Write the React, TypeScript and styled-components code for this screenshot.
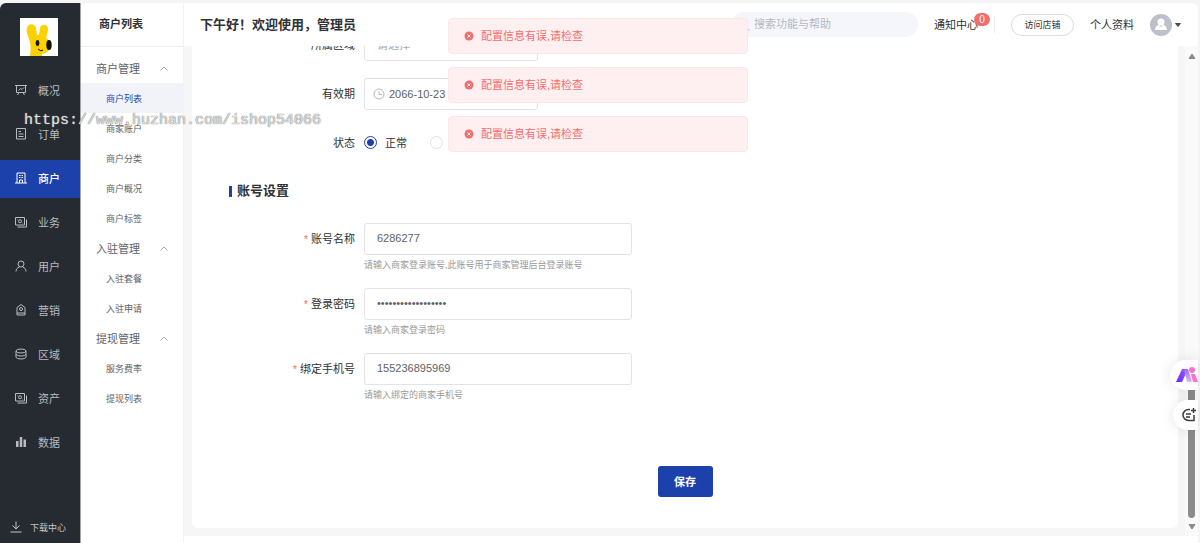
import React, { useState } from 'react';
import styled, { createGlobalStyle, css } from 'styled-components';

const GlobalStyle = createGlobalStyle`
  *, *::before, *::after { box-sizing: border-box; }
  body { margin: 0; background: #f5f5f6; }
  body, button, input, select {
    font-family: 'Liberation Sans', 'Noto Sans CJK SC', sans-serif;
    font-size: 11px;
    color: #303133;
  }
  a { color: inherit; text-decoration: none; }
  button { cursor: pointer; }
`;

const Shell = styled.div`
  position: relative;
  display: flex;
  height: 100vh;
  padding: 3px 2px 0 0;
  overflow: hidden;
`;

const Sidebar = styled.aside`
  flex: none;
  display: flex;
  flex-direction: column;
  width: 81px;
  background: #262b31;
  border-right: 1px solid #a2a4a7;
  border-top-left-radius: 6px;
`;

const Logo = styled.svg`
  width: 38px;
  height: 38px;
  margin: 15px auto 16px 20px;
  background: #fff;
`;

const MainNav = styled.nav`
  flex: 1;
  display: flex;
  flex-direction: column;
  gap: 6px;
`;

const NavLink = styled.a<{ $active?: boolean }>`
  display: flex;
  align-items: center;
  gap: 11px;
  height: 38px;
  padding: 0 0 2px 15px;
  color: ${(p) => (p.$active ? '#fff' : '#b9bbbe')};
  font-weight: ${(p) => (p.$active ? 500 : 400)};
  background: ${(p) => (p.$active ? '#1d41ab' : 'transparent')};
`;

const DownloadLink = styled.a`
  display: flex;
  align-items: center;
  gap: 8px;
  height: 32px;
  padding-left: 10px;
  font-size: 9px;
  color: #c3c5c8;
`;

const LineIcon = styled.svg`
  flex: none;
  width: 12px;
  height: 12px;
  fill: none;
  stroke: currentColor;
  stroke-width: 2;
`;

const SubMenu = styled.aside`
  flex: none;
  width: 103px;
  background: #fff;
  border-right: 1px solid #f3f3f4;
`;

const SubTitle = styled.h2`
  height: 44px;
  margin: 0 0 6px;
  padding-left: 18px;
  border-bottom: 1px solid #efeff1;
  font-size: 11px;
  line-height: 42px;
  font-weight: 700;
`;

const GroupButton = styled.button`
  display: flex;
  align-items: center;
  justify-content: space-between;
  width: 100%;
  height: 30px;
  padding: 0 15px;
  border: 0;
  background: none;
  color: #606266;
`;

const Chevron = styled.svg`
  width: 8px;
  height: 5px;
  fill: none;
  stroke: #a5a8ae;
`;

const SubLink = styled.a<{ $active?: boolean }>`
  display: flex;
  align-items: center;
  height: 30px;
  padding-left: 25px;
  font-size: 9px;
  color: ${(p) => (p.$active ? '#2446b0' : '#606266')};
  background: ${(p) => (p.$active ? '#f2f3f8' : 'transparent')};
`;

const Main = styled.div`
  flex: 1;
  min-width: 0;
  display: flex;
  flex-direction: column;
  background: #fff;
  border-top-right-radius: 6px;
`;

const Header = styled.header`
  flex: none;
  display: flex;
  align-items: center;
  gap: 16px;
  height: 43px;
  padding: 0 16px;
`;

const Greeting = styled.h1`
  flex: 1;
  margin: 0;
  font-size: 13px;
  line-height: 20px;
  font-weight: 700;
  white-space: nowrap;
`;

const SearchBox = styled.label`
  display: flex;
  align-items: center;
  gap: 4px;
  width: 187px;
  height: 25px;
  padding: 0 7px;
  border-radius: 13px;
  background: #f4f6fb;
  color: #b4b8c0;
`;

const SearchInput = styled.input`
  flex: 1;
  min-width: 0;
  padding: 0 0 2px;
  border: 0;
  outline: 0;
  background: none;
  &::placeholder { color: #b4b8c0; }
`;

const HeaderLink = styled.a`
  position: relative;
  padding-bottom: 2px;
`;

const Badge = styled.span`
  position: absolute;
  top: -3px;
  right: -12px;
  width: 16px;
  height: 13px;
  border-radius: 7px;
  background: #f56c6c;
  color: #fff;
  font-size: 10px;
  line-height: 13px;
  text-align: center;
`;

const Divider = styled.span`
  width: 1px;
  height: 17px;
  background: #ebecee;
`;

const VisitButton = styled.button`
  width: 63px;
  height: 22px;
  padding: 0;
  border: 1px solid #dcdde0;
  border-radius: 11px;
  background: #fff;
  font-size: 9px;
`;

const UserButton = styled.button`
  display: flex;
  align-items: center;
  gap: 2px;
  padding: 0;
  border: 0;
  background: none;
`;

const ScrollPane = styled.div`
  flex: 1;
  min-height: 0;
  display: flex;
  margin-bottom: 7px;
  background: #f6f6f7;
`;

const ScrollView = styled.main`
  flex: 1;
  min-width: 0;
  display: flex;
  flex-direction: column;
  justify-content: flex-end;
  overflow: hidden;
  padding: 0 7px 8px 8px;
`;

const Card = styled.form`
  flex: none;
  display: flex;
  flex-direction: column;
  padding: 40px 0 31px;
  border-radius: 6px;
  background: #fff;
`;

const FieldGroup = styled.div<{ $gap: number }>`
  display: flex;
  flex-direction: column;
  gap: ${(p) => p.$gap}px;
`;

const Field = styled.div`
  display: grid;
  grid-template-columns: 163px minmax(0, 268px);
  column-gap: 9px;
`;

const FieldLabel = styled.label<{ $required?: boolean }>`
  height: 32px;
  line-height: 32px;
  text-align: right;
  ${(p) =>
    p.$required &&
    css`
      &::before {
        content: '*';
        margin-right: 3px;
        color: #f56c6c;
      }
    `}
`;

const boxStyle = css`
  height: 32px;
  border: 1px solid #e1e3e9;
  border-radius: 3px;
  background: #fff;
  color: #606266;
`;

const TextInput = styled.input`
  ${boxStyle}
  width: 100%;
  padding: 0 12px 2px;
  outline: 0;
`;

const RegionSelect = styled.select`
  ${boxStyle}
  appearance: none;
  width: 174px;
  padding: 0 12px;
  color: #a8abb2;
`;

const DateBox = styled.div`
  ${boxStyle}
  display: flex;
  align-items: center;
  gap: 4px;
  width: 174px;
  padding: 0 8px 1px;
  svg { color: #b4b8c0; }
`;

const DateInput = styled.input`
  flex: 1;
  min-width: 0;
  padding: 0;
  border: 0;
  outline: 0;
  background: none;
  color: #606266;
`;

const Hint = styled.p`
  margin: 0;
  font-size: 9px;
  line-height: 20px;
  color: #999;
`;

const RadioRow = styled.div`
  display: flex;
  align-items: center;
  gap: 23px;
  height: 31px;
`;

const RadioLabel = styled.label`
  display: flex;
  align-items: center;
  gap: 8px;
  line-height: 16px;
`;

const Radio = styled.input`
  appearance: none;
  width: 13px;
  height: 13px;
  margin: 0;
  border: 1px solid #dcdfe6;
  border-radius: 50%;
  background: #fff;
  &:checked {
    border-color: #1d41ab;
    background: radial-gradient(circle, #1d41ab 3px, #fff 4px);
  }
`;

const SectionTitle = styled.h3`
  display: flex;
  align-items: center;
  gap: 5px;
  height: 24px;
  margin: 20px 0 20px 37px;
  font-size: 13px;
  line-height: 24px;
  font-weight: 700;
  &::before {
    content: '';
    width: 3px;
    height: 11px;
    background: #1d41ab;
  }
`;

const SaveButton = styled.button`
  align-self: center;
  width: 55px;
  height: 31px;
  margin-top: 61px;
  padding: 0 0 2px;
  border: 0;
  border-radius: 3px;
  background: #1d41ab;
  color: #fff;
  font-weight: 700;
`;

const ScrollTrack = styled.div`
  flex: none;
  display: flex;
  flex-direction: column;
  align-items: center;
  width: 13px;
  padding: 7px 0 6px;
  background: #fafafa;
`;

const ScrollSpace = styled.span`
  flex: 326;
`;

const ScrollThumb = styled.span`
  flex: 130;
  width: 7px;
  margin-bottom: 6px;
  border-radius: 4px;
  background: #8b8b8b;
`;

const FloatTools = styled.div`
  position: absolute;
  right: 2px;
  bottom: 113px;
  display: flex;
  flex-direction: column;
  align-items: flex-end;
  gap: 10px;
`;

const FloatButton = styled.button<{ $width: number }>`
  display: flex;
  align-items: center;
  width: ${(p) => p.$width}px;
  height: 30px;
  padding: 0 0 0 ${(p) => (p.$width > 26 ? 6 : 9)}px;
  border: 0;
  border-radius: 15px 0 0 15px;
  background: #fff;
  box-shadow: 0 0 14px rgba(0, 0, 0, 0.1);
`;

const ToastStack = styled.div`
  position: absolute;
  top: 18px;
  left: 0;
  right: 4px;
  margin: 0 auto;
  display: flex;
  flex-direction: column;
  gap: 13px;
  width: 300px;
`;

const Toast = styled.div`
  display: flex;
  align-items: center;
  gap: 7px;
  height: 36px;
  padding: 0 15px;
  border: 1px solid #fde6e6;
  border-radius: 4px;
  background: #fef0f0;
  color: #f56c6c;
`;

const ToastText = styled.span`
  padding-bottom: 2px;
`;

const Watermark = styled.div`
  position: absolute;
  top: 112px;
  left: 24px;
  font-family: 'Liberation Mono', monospace;
  font-size: 15px;
  line-height: 18px;
  color: #dedede;
  text-shadow: 0 0 1px #777, 0 0 1px #999;
  pointer-events: none;
`;

const icons: Record<string, React.ReactNode> = {
  board: <path d="M0 3h24M3 3v14h18V3M8 17l-3 5M16 17l3 5M7 13l4-4 3 2 4-4" />,
  order: <path d="M3 1h18v21H3zM7 7h5M7 12h10M7 17h10" />,
  shop: <path d="M4 22V2h16v20M0 22h24M8 7h3M13 7h3M8 11h3M13 11h3M9 22v-6h6v6" />,
  money: (
    <>
      <path d="M1 3h18v15H1zM5 22h18V7" />
      <circle cx="10" cy="10.500" r="3" />
      <path d="M4 7h1M15 14h1" />
    </>
  ),
  user: (
    <>
      <circle cx="12" cy="8" r="6" />
      <path d="M2 23c0-5 3-8 7-9M22 23c0-5-3-8-7-9" />
    </>
  ),
  tag: (
    <>
      <path d="M12 1l8 6v15H4V7zM4 18h16" />
      <circle cx="12" cy="10" r="3" />
    </>
  ),
  stack: (
    <>
      <ellipse cx="12" cy="6" rx="10" ry="4" />
      <path d="M2 6v12c0 2 4 4 10 4s10-2 10-4V6M2 12c0 2 4 4 10 4s10-2 10-4" />
    </>
  ),
  bars: (
    <path d="M2 10h5v12H2zM9.500 2h5v20h-5zM17 7h5v15h-5z" fill="currentColor" stroke="none" />
  ),
  download: <path d="M12 1v15M5 9l7 7 7-7M1 22h22" />,
  search: (
    <>
      <circle cx="11" cy="11" r="8" />
      <path d="M17 17l6 6" />
    </>
  ),
  clock: (
    <>
      <circle cx="12" cy="12" r="10" />
      <path d="M12 6v7h6" />
    </>
  ),
};

const Icon = ({ name }: { name: string }) => (
  <LineIcon viewBox="0 0 24 24" aria-hidden="true">
    {icons[name]}
  </LineIcon>
);

const navItems = [
  { icon: 'board', text: '概况' },
  { icon: 'order', text: '订单' },
  { icon: 'shop', text: '商户' },
  { icon: 'money', text: '业务' },
  { icon: 'user', text: '用户' },
  { icon: 'tag', text: '营销' },
  { icon: 'stack', text: '区域' },
  { icon: 'money', text: '资产' },
  { icon: 'bars', text: '数据' },
];

const groups = [
  { title: '商户管理', items: ['商户列表', '商家账户', '商户分类', '商户概况', '商户标签'] },
  { title: '入驻管理', items: ['入驻套餐', '入驻申请'] },
  { title: '提现管理', items: ['服务费率', '提现列表'] },
];

const accountFields = [
  {
    id: 'account',
    label: '账号名称',
    type: 'text',
    value: '6286277',
    hint: '请输入商家登录账号,此账号用于商家管理后台登录账号',
  },
  {
    id: 'password',
    label: '登录密码',
    type: 'password',
    value: 'abcdefghijklmnopqr',
    hint: '请输入商家登录密码',
  },
  {
    id: 'phone',
    label: '绑定手机号',
    type: 'text',
    value: '155236895969',
    hint: '请输入绑定的商家手机号',
  },
];

const toasts = [1, 2, 3];

const BrandLogo = () => (
  <Logo viewBox="0 0 38 38" role="img" aria-label="logo">
    <path
      d="M10 38c1-6 1-12-1-17C7 16 6 13 7 10c1-5 8-5 9 0l1 7h2l1-7c1-5 9-4 8 2l-2 8c4 2 5 6 4 10-1 4-5 5-8 6v2z"
      fill="#fdd000"
    />
    <ellipse cx="29" cy="27" rx="2.700" ry="5" fill="#111" />
    <ellipse cx="17.500" cy="25" rx="1.800" ry="3" fill="#111" />
    <path d="M18 31q3 3 5 1" fill="none" stroke="#111" />
  </Logo>
);

export default function App() {
  const [status, setStatus] = useState('on');

  return (
    <>
      <GlobalStyle />
      <Shell>
        <Sidebar>
          <BrandLogo />
          <MainNav>
            {navItems.map((item) => (
              <NavLink key={item.text} href="#" $active={item.text === '商户'}>
                <Icon name={item.icon} />
                {item.text}
              </NavLink>
            ))}
          </MainNav>
          <DownloadLink href="#">
            <Icon name="download" />
            下载中心
          </DownloadLink>
        </Sidebar>

        <SubMenu>
          <SubTitle>商户列表</SubTitle>
          {groups.map((group) => (
            <nav key={group.title}>
              <GroupButton type="button">
                {group.title}
                <Chevron viewBox="0 0 8 5" aria-hidden="true">
                  <path d="M.5 4.500L4 1l3.500 3.500" />
                </Chevron>
              </GroupButton>
              {group.items.map((text) => (
                <SubLink key={text} href="#" $active={text === '商户列表'}>
                  {text}
                </SubLink>
              ))}
            </nav>
          ))}
        </SubMenu>

        <Main>
          <Header>
            <Greeting>下午好！欢迎使用，管理员</Greeting>
            <SearchBox>
              <Icon name="search" />
              <SearchInput type="text" placeholder="搜索功能与帮助" aria-label="搜索" />
            </SearchBox>
            <HeaderLink href="#">
              通知中心<Badge>0</Badge>
            </HeaderLink>
            <Divider />
            <VisitButton type="button">访问店铺</VisitButton>
            <HeaderLink href="#">个人资料</HeaderLink>
            <UserButton type="button" aria-label="用户菜单">
              <svg width="22" height="22" viewBox="0 0 22 22" aria-hidden="true">
                <circle cx="11" cy="11" r="11" fill="#bcc0ca" />
                <circle cx="11" cy="8" r="3.500" fill="#fff" />
                <path d="M5 16c0-4 3-5 4-5l2 2 2-2c1 0 4 1 4 5z" fill="#fff" />
              </svg>
              <svg width="8" height="6" viewBox="0 0 8 6" aria-hidden="true">
                <path d="M1.500 1.500h5L4 4.500z" fill="#4a4c50" stroke="#4a4c50" strokeLinejoin="round" />
              </svg>
            </UserButton>
          </Header>

          <ScrollPane>
            <ScrollView>
              <Card onSubmit={(e) => e.preventDefault()}>
                <FieldGroup $gap={17}>
                  <Field>
                    <FieldLabel htmlFor="region">所属区域</FieldLabel>
                    <RegionSelect id="region">
                      <option>请选择</option>
                    </RegionSelect>
                  </Field>
                  <Field>
                    <FieldLabel htmlFor="expire">有效期</FieldLabel>
                    <DateBox>
                      <Icon name="clock" />
                      <DateInput id="expire" type="text" defaultValue="2066-10-23" />
                    </DateBox>
                  </Field>
                  <Field>
                    <FieldLabel as="span">状态</FieldLabel>
                    <RadioRow role="radiogroup" aria-label="状态">
                      <RadioLabel>
                        <Radio
                          type="radio"
                          name="status"
                          checked={status === 'on'}
                          onChange={() => setStatus('on')}
                        />
                        正常
                      </RadioLabel>
                      <Radio
                        type="radio"
                        name="status"
                        aria-label="禁用"
                        checked={status === 'off'}
                        onChange={() => setStatus('off')}
                      />
                    </RadioRow>
                  </Field>
                </FieldGroup>

                <SectionTitle>账号设置</SectionTitle>

                <FieldGroup $gap={13}>
                  {accountFields.map((f) => (
                    <Field key={f.id}>
                      <FieldLabel htmlFor={f.id} $required>
                        {f.label}
                      </FieldLabel>
                      <div>
                        <TextInput id={f.id} type={f.type} defaultValue={f.value} />
                        <Hint>{f.hint}</Hint>
                      </div>
                    </Field>
                  ))}
                </FieldGroup>

                <SaveButton type="submit">保存</SaveButton>
              </Card>
            </ScrollView>

            <ScrollTrack aria-hidden="true">
              <svg width="8" height="6" viewBox="0 0 8 6">
                <path d="M1 5.500h6L4 1z" fill="#8b8b8b" stroke="#8b8b8b" strokeLinejoin="round" />
              </svg>
              <ScrollSpace />
              <ScrollThumb />
              <svg width="8" height="6" viewBox="0 0 8 6">
                <path d="M1 .5h6L4 5z" fill="#8b8b8b" stroke="#8b8b8b" strokeLinejoin="round" />
              </svg>
            </ScrollTrack>
          </ScrollPane>
        </Main>

        <FloatTools>
          <FloatButton type="button" $width={28} aria-label="AI">
            <svg width="22" height="16" viewBox="0 0 22 16" aria-hidden="true">
              <defs>
                <linearGradient id="violet" x1="0" y1="1" x2="1" y2="0">
                  <stop offset="0" stopColor="#6a2bff" />
                  <stop offset="1" stopColor="#a45cff" />
                </linearGradient>
                <linearGradient id="lilac" x1="0" y1="0" x2="0" y2="1">
                  <stop offset="0" stopColor="#a466f7" />
                  <stop offset="1" stopColor="#dcb8fb" />
                </linearGradient>
              </defs>
              <path d="M6 2h6L6 15H0z" fill="url(#violet)" />
              <path d="M8 2h4l4 13h-5z" fill="url(#lilac)" />
              <path d="M15 7h4l3 8h-5z" fill="#ff6fd0" />
              <circle cx="16" cy="3" r="3" fill="#ff6fd0" />
            </svg>
          </FloatButton>
          <FloatButton type="button" $width={25} aria-label="反馈">
            <svg
              width="14"
              height="14"
              viewBox="0 0 14 14"
              fill="none"
              stroke="#3a3c40"
              strokeWidth="1.500"
              aria-hidden="true"
            >
              <path d="M8 1.500H6.500a5.500 5.500 0 1 0 0 11H12V7M4 6h5M4 9h4M11.500 0v5M9 2.500h5" />
            </svg>
          </FloatButton>
        </FloatTools>

        <Watermark>https://www.huzhan.com/ishop54066</Watermark>

        <ToastStack role="alert">
          {toasts.map((n) => (
            <Toast key={n}>
              <svg width="10" height="10" viewBox="0 0 10 10" aria-hidden="true">
                <circle cx="5" cy="5" r="4.500" fill="#f56c6c" />
                <path d="M3.500 3.500l3 3M6.500 3.500l-3 3" stroke="#fff" />
              </svg>
              <ToastText>配置信息有误,请检查</ToastText>
            </Toast>
          ))}
        </ToastStack>
      </Shell>
    </>
  );
}
